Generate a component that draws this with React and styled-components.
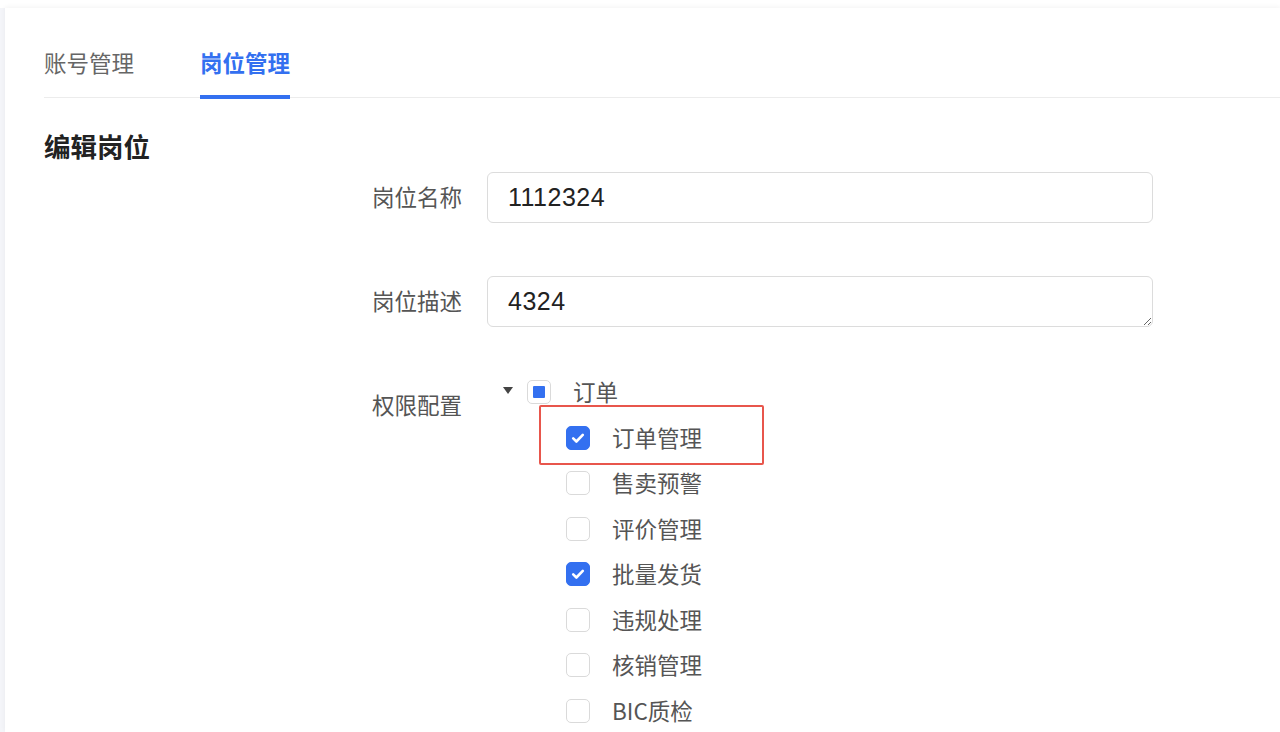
import styled, { createGlobalStyle } from "styled-components";

const GlobalStyle = createGlobalStyle`
  html, body {
    margin: 0;
    padding: 0;
    background: #fff;
    font-family: "Noto Sans CJK SC", "Noto Sans", sans-serif;
  }
  * { box-sizing: border-box; }
`;

const BLUE = "#3370f0";

const Page = styled.div`
  padding-top: 8px;
  height: 732px;
  overflow: hidden;
`;

const Shell = styled.div`
  height: 100%;
  background: #f4f5f9;
  padding-left: 5px;
`;

const Card = styled.div`
  height: 100%;
  background: #fff;
  box-shadow: 0 -1px 5px rgba(0, 0, 0, 0.05);
  padding-left: 39px;
`;

const TabBar = styled.div`
  display: flex;
  gap: 66px;
  height: 90px;
  align-items: flex-end;
  border-bottom: 1px solid #ececec;
`;

const Tab = styled.div`
  font-size: 22.5px;
  line-height: 32px;
  padding-bottom: 17px;
  color: ${(p) => (p.$active ? BLUE : "#666")};
  font-weight: ${(p) => (p.$active ? 600 : 400)};
  border-bottom: 4px solid ${(p) => (p.$active ? BLUE : "transparent")};
  margin-bottom: -2px;
`;

const Title = styled.h2`
  margin: 29px 0 0;
  font-size: 26.5px;
  line-height: 38px;
  font-weight: 700;
  color: #222;
`;

const Form = styled.div`
  padding-left: 328px;
  margin-top: 7px;
  display: flex;
  flex-direction: column;
  gap: 53px;
`;

const Row = styled.div`
  display: flex;
  align-items: flex-start;
  gap: 25px;
`;

const Label = styled.div`
  width: 90px;
  flex-shrink: 0;
  font-size: 22.5px;
  line-height: 49px;
  padding-bottom: 2px;
  color: #555;
  white-space: nowrap;
`;

const fieldCss = `
  width: 666px;
  height: 51px;
  border: 1px solid #dcdcdc;
  border-radius: 6px;
  font-family: "Liberation Sans", "Noto Sans CJK SC", sans-serif;
  font-size: 25px;
  letter-spacing: 0.5px;
  color: #222;
  outline: none;
`;

const TextInput = styled.input`
  ${fieldCss}
  padding: 0 20px 1px;
`;

const TextArea = styled.textarea`
  ${fieldCss}
  min-height: 51px;
  padding: 8px 20px 6px;
  line-height: 33px;
  resize: vertical;
  display: block;
`;

const Tree = styled.div`
  display: flex;
  flex-direction: column;
  gap: 21.5px;
`;

const TreeRow = styled.div`
  position: relative;
  display: flex;
  align-items: center;
  height: 24px;
  padding-left: ${(p) => p.$indent}px;
`;

const Caret = styled.span`
  width: 26px;
  margin-right: 14px;
  display: flex;
  justify-content: flex-end;
  &::before {
    content: "";
    display: block;
    border-left: 5.5px solid transparent;
    border-right: 5.5px solid transparent;
    border-top: 7px solid #444;
    margin-top: -3px;
  }
`;

const Box = styled.span`
  width: 24px;
  height: 24px;
  flex-shrink: 0;
  border-radius: 5px;
  display: flex;
  align-items: center;
  justify-content: center;
  background: ${(p) => (p.$checked ? BLUE : "#fff")};
  border: 1px solid ${(p) => (p.$checked ? BLUE : "#dadada")};
`;

const Dash = styled.span`
  width: 12px;
  height: 12px;
  background: ${BLUE};
  border-radius: 1px;
`;

const NodeText = styled.span`
  margin-left: 22px;
  margin-top: -2px;
  font-size: 22.5px;
  line-height: 24px;
  color: #555;
  white-space: nowrap;
`;

const Highlight = styled.div`
  position: absolute;
  left: 52px;
  top: -21px;
  width: 225px;
  height: 60px;
  border: 2px solid #e8564c;
  border-radius: 2px;
  pointer-events: none;
`;

const children = [
  { name: "订单管理", checked: true, mark: true },
  { name: "售卖预警" },
  { name: "评价管理" },
  { name: "批量发货", checked: true },
  { name: "违规处理" },
  { name: "核销管理" },
  { name: "BIC质检" },
];

function Check({ checked }) {
  return (
    <Box $checked={checked}>
      {checked && (
        <svg width="16" height="16" viewBox="0 0 16 16">
          <path
            d="M3.2 8.4l3.2 3.1 6.4-6.6"
            fill="none"
            stroke="#fff"
            strokeWidth="2.6"
            strokeLinecap="round"
            strokeLinejoin="round"
          />
        </svg>
      )}
    </Box>
  );
}

export default function App() {
  return (
    <Page>
      <GlobalStyle />
      <Shell>
        <Card>
          <TabBar>
            <Tab>账号管理</Tab>
            <Tab $active>岗位管理</Tab>
          </TabBar>
          <Title>编辑岗位</Title>
          <Form>
            <Row>
              <Label>岗位名称</Label>
              <TextInput defaultValue="1112324" />
            </Row>
            <Row>
              <Label>岗位描述</Label>
              <TextArea rows={1} defaultValue="4324" />
            </Row>
            <Row>
              <Label>权限配置</Label>
              <Tree>
                <TreeRow $indent={0}>
                  <Caret />
                  <Box>
                    <Dash />
                  </Box>
                  <NodeText>订单</NodeText>
                </TreeRow>
                {children.map((c) => (
                  <TreeRow key={c.name} $indent={79}>
                    {c.mark && <Highlight />}
                    <Check checked={c.checked} />
                    <NodeText>{c.name}</NodeText>
                  </TreeRow>
                ))}
              </Tree>
            </Row>
          </Form>
        </Card>
      </Shell>
    </Page>
  );
}
